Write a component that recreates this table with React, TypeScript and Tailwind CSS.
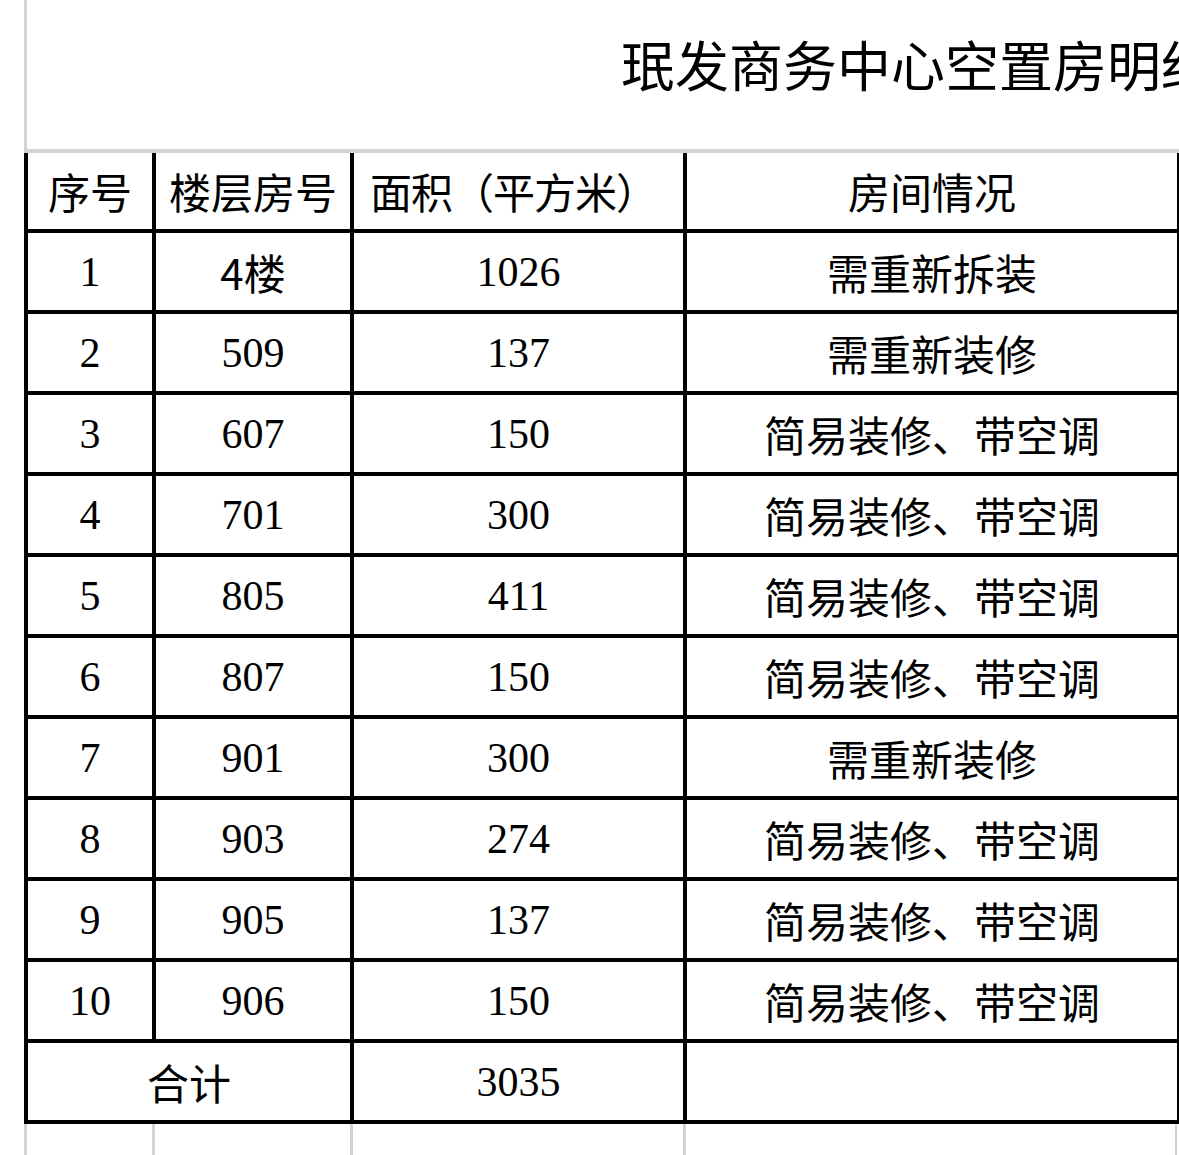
const rows = [
  { no: "1", room: "4楼", area: "1026", status: "需重新拆装", sansRoom: true },
  { no: "2", room: "509", area: "137", status: "需重新装修" },
  { no: "3", room: "607", area: "150", status: "简易装修、带空调" },
  { no: "4", room: "701", area: "300", status: "简易装修、带空调" },
  { no: "5", room: "805", area: "411", status: "简易装修、带空调" },
  { no: "6", room: "807", area: "150", status: "简易装修、带空调" },
  { no: "7", room: "901", area: "300", status: "需重新装修" },
  { no: "8", room: "903", area: "274", status: "简易装修、带空调" },
  { no: "9", room: "905", area: "137", status: "简易装修、带空调" },
  { no: "10", room: "906", area: "150", status: "简易装修、带空调" },
]

const sans = "font-['Noto_Sans_CJK_SC',sans-serif]"
const serif = "font-['Liberation_Serif','Noto_Sans_CJK_SC',serif]"

// widths include the 4px left border of each cell
const cols = "grid grid-cols-[128px_198px_333px_494px]"

function Cell({ children, className = "" }: { children?: React.ReactNode; className?: string }) {
  return (
    <div className={`flex items-center justify-center border-l-4 border-b-4 border-black text-[42px] leading-none text-black ${className}`}>
      {children}
    </div>
  )
}

export default function App() {
  return (
    <div className="w-[1179px] h-[1155px] overflow-hidden bg-white">
      <div className="ml-[24px] h-[149px] border-l-[3px] border-[#d2d2d8] overflow-hidden">
        <div className={`pl-[594px] pt-[37px] text-[54px] leading-none whitespace-nowrap text-black ${sans}`}>
          珉发商务中心空置房明细
        </div>
      </div>
      <div className="h-[4px] ml-[24px] bg-[#d2d2d8]" />
      <div className="ml-[24px] w-[1155px] border-r-2 border-black">
        <div className={`${cols} h-[80px]`}>
          <Cell className={sans}>序号</Cell>
          <Cell className={sans}>楼层房号</Cell>
          <Cell className={`${sans} tracking-[-1px] pr-[10px]`}>面积（平方米）</Cell>
          <Cell className={sans}>房间情况</Cell>
        </div>
        {rows.map((r) => (
          <div key={r.no} className={`${cols} h-[81px]`}>
            <Cell className={serif}>{r.no}</Cell>
            <Cell className={r.sansRoom ? sans : serif}>{r.room}</Cell>
            <Cell className={serif}>{r.area}</Cell>
            <Cell className={sans}>{r.status}</Cell>
          </div>
        ))}
        <div className="grid grid-cols-[326px_333px_494px] h-[81px]">
          <Cell className={sans}>合计</Cell>
          <Cell className={serif}>3035</Cell>
          <Cell />
        </div>
      </div>
      <div className={`${cols} ml-[24px] h-[40px]`}>
        <div className="border-l-[3px] border-[#d2d2d8]" />
        <div className="border-l-[3px] border-[#d2d2d8]" />
        <div className="border-l-[3px] border-[#d2d2d8]" />
        <div className="border-l-[3px] border-[#d2d2d8] border-r-2" />
      </div>
    </div>
  )
}
